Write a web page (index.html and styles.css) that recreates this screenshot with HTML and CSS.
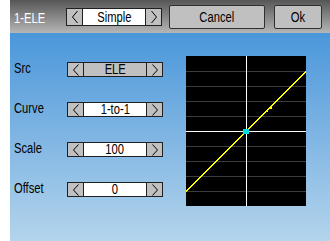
FILE: index.html
```html
<!DOCTYPE html>
<html lang="en">
<head>
    <meta charset="UTF-8">
    <title>1-ELE</title>
    <link rel="stylesheet" href="styles.css">
</head>
<body>
    <div class="screen">
        <div class="header">
            <div class="title"><span class="txt">1-ELE</span></div>
            <div class="choice big">
                <span class="arrow"><svg width="8" height="14" viewBox="0 0 8 14"><polyline points="6.5,1 1.5,7 6.5,13" /></svg></span>
                <span class="value"><span class="txt">Simple</span></span>
                <span class="arrow"><svg width="8" height="14" viewBox="0 0 8 14"><polyline points="1.5,1 6.5,7 1.5,13" /></svg></span>
            </div>
            <button class="btn cancel"><span class="txt">Cancel</span></button>
            <button class="btn ok"><span class="txt">Ok</span></button>
        </div>
        <div class="main">
            <div class="form">
                <div class="row">
                    <span class="label"><span class="txt">Src</span></span>
                    <div class="choice">
                        <span class="arrow"><svg width="8" height="12" viewBox="0 0 8 12"><polyline points="6.5,0.5 1.5,6 6.5,11.5" /></svg></span>
                        <span class="value grey"><span class="txt">ELE</span></span>
                        <span class="arrow"><svg width="8" height="12" viewBox="0 0 8 12"><polyline points="1.5,0.5 6.5,6 1.5,11.5" /></svg></span>
                    </div>
                </div>
                <div class="row">
                    <span class="label"><span class="txt">Curve</span></span>
                    <div class="choice">
                        <span class="arrow"><svg width="8" height="12" viewBox="0 0 8 12"><polyline points="6.5,0.5 1.5,6 6.5,11.5" /></svg></span>
                        <span class="value"><span class="txt">1-to-1</span></span>
                        <span class="arrow"><svg width="8" height="12" viewBox="0 0 8 12"><polyline points="1.5,0.5 6.5,6 1.5,11.5" /></svg></span>
                    </div>
                </div>
                <div class="row">
                    <span class="label"><span class="txt">Scale</span></span>
                    <div class="choice">
                        <span class="arrow"><svg width="8" height="12" viewBox="0 0 8 12"><polyline points="6.5,0.5 1.5,6 6.5,11.5" /></svg></span>
                        <span class="value"><span class="txt">100</span></span>
                        <span class="arrow"><svg width="8" height="12" viewBox="0 0 8 12"><polyline points="1.5,0.5 6.5,6 1.5,11.5" /></svg></span>
                    </div>
                </div>
                <div class="row">
                    <span class="label"><span class="txt">Offset</span></span>
                    <div class="choice">
                        <span class="arrow"><svg width="8" height="12" viewBox="0 0 8 12"><polyline points="6.5,0.5 1.5,6 6.5,11.5" /></svg></span>
                        <span class="value"><span class="txt">0</span></span>
                        <span class="arrow"><svg width="8" height="12" viewBox="0 0 8 12"><polyline points="1.5,0.5 6.5,6 1.5,11.5" /></svg></span>
                    </div>
                </div>
            </div>
            <svg class="chart" width="120" height="150" viewBox="0 0 120 150">
                <rect x="0" y="0" width="120" height="150" fill="#000" />
                <g stroke="#3c3c3c" stroke-width="1">
                    <line x1="0" y1="15.5" x2="120" y2="15.5" />
                    <line x1="0" y1="30.5" x2="120" y2="30.5" />
                    <line x1="0" y1="45.5" x2="120" y2="45.5" />
                    <line x1="0" y1="60.5" x2="120" y2="60.5" />
                    <line x1="0" y1="90.5" x2="120" y2="90.5" />
                    <line x1="0" y1="105.5" x2="120" y2="105.5" />
                    <line x1="0" y1="120.5" x2="120" y2="120.5" />
                    <line x1="0" y1="135.5" x2="120" y2="135.5" />
                </g>
                <g stroke="#fff" stroke-width="1">
                    <line x1="0" y1="75.5" x2="120" y2="75.5" />
                    <line x1="60.5" y1="0" x2="60.5" y2="150" />
                </g>
                <line class="curve" x1="0" y1="135.5" x2="120" y2="15.5" />
                <rect x="80" y="54" width="2" height="2" fill="#ffff00" />
                <rect x="84" y="51" width="2" height="2" fill="#ffff00" />
                <rect x="57" y="73" width="6" height="5" fill="#00e0e0" />
            </svg>
        </div>
    </div>
</body>
</html>
```

FILE: styles.css
```css
body {
    margin: 0;
    padding: 0;
    background-color: #ffffff;
    font-family: "Liberation Sans", Arial, sans-serif;
    font-size: 14px;
}
.screen {
    width: 320px;
    height: 241px;
    margin-left: 10px;
    background: linear-gradient(#3a8dd8, #b4d4ec);
}
.txt {
    display: inline-block;
    transform: scaleX(0.8);
}
.header {
    height: 33px;
    box-sizing: border-box;
    padding-top: 5px;
    display: flex;
    align-items: flex-start;
    background: linear-gradient(#565656, #b6b6b6);
}
.title {
    width: 52px;
    padding-left: 4px;
    margin-top: 6px;
    color: #ffffff;
    line-height: 14px;
}
.title .txt,
.label .txt {
    transform-origin: left center;
}
.choice {
    display: flex;
    width: 96px;
    height: 15px;
    box-sizing: border-box;
    border: 1px solid #202020;
    background-color: #ffffff;
}
.choice.big {
    height: 18px;
    margin-top: 3px;
}
.arrow {
    width: 15px;
    flex: none;
    display: flex;
    align-items: center;
    justify-content: center;
    background-color: #c0c0c0;
}
.arrow:first-child {
    border-right: 1px solid #202020;
}
.arrow:last-child {
    border-left: 1px solid #202020;
}
.arrow polyline {
    fill: none;
    stroke: #000000;
    stroke-width: 1;
}
.value {
    flex: 1;
    text-align: center;
    line-height: 12px;
    color: #000000;
}
.big .value {
    line-height: 16px;
}
.value.grey {
    background-color: #c0c0c0;
}
.btn {
    height: 24px;
    margin: 0;
    padding: 0;
    border: 1px solid #303030;
    border-radius: 2px;
    background-color: #c0c0c0;
    font-family: inherit;
    font-size: 14px;
    color: #000000;
}
.cancel {
    width: 96px;
    margin-left: 7px;
}
.ok {
    width: 48px;
    margin-left: 9px;
}
.main {
    display: flex;
    padding-top: 23px;
}
.form {
    width: 172px;
    padding-left: 4px;
    padding-top: 6px;
    display: flex;
    flex-direction: column;
    gap: 25px;
}
.row {
    display: grid;
    grid-template-columns: 53px 96px;
    height: 15px;
}
.label {
    line-height: 12px;
    color: #000000;
}
.chart {
    display: block;
}
.curve {
    stroke: #ffff00;
    stroke-width: 1;
    shape-rendering: crispEdges;
}
```
